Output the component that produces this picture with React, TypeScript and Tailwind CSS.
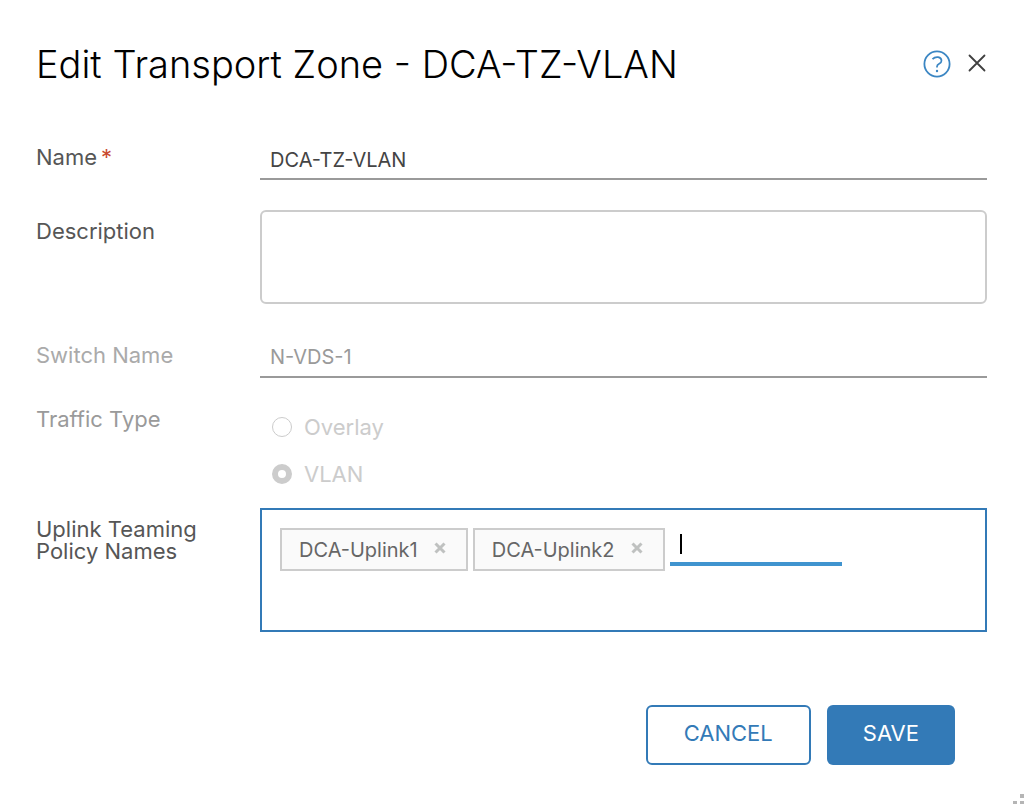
import { useState, type ReactNode } from "react";

interface FormRowProps {
  label: ReactNode;
  htmlFor: string;
  className?: string;
  labelClassName?: string;
  children: ReactNode;
}

const FormRow = ({ label, htmlFor, className = "", labelClassName = "", children }: FormRowProps) => {
  return (
    <div className={`flex items-start ${className}`}>
      <label htmlFor={htmlFor} className={`w-56 shrink-0 pr-4 text-[22px] leading-[22px] ${labelClassName}`}>
        {label}
      </label>
      <div className="min-w-0 flex-1">{children}</div>
    </div>
  );
};

interface RadioProps {
  id: string;
  label: string;
  checked: boolean;
}

const Radio = ({ id, label, checked }: RadioProps) => {
  return (
    <div className="flex items-center gap-3">
      <input
        id={id}
        type="radio"
        name="traffic-type"
        checked={checked}
        readOnly
        disabled
        className="size-5 appearance-none rounded-full border border-[#cccccc] checked:border-[6px]"
      />
      <label htmlFor={id} className="text-[22px] leading-[22px] text-[#cccccc]">
        {label}
      </label>
    </div>
  );
};

interface TagProps {
  name: string;
  onRemove: () => void;
}

const Tag = ({ name, onRemove }: TagProps) => {
  return (
    <span className="flex h-[43px] items-center border-2 border-[#cccccc] bg-[#fafafa] pr-5 pl-[17px] text-xl text-[#666666]">
      {name}
      <button type="button" aria-label={`Remove ${name}`} onClick={onRemove} className="ml-4">
        <svg width="12" height="12" viewBox="0 0 12 12" className="mb-1">
          <path d="M1.5 1.5L10.5 10.5M10.5 1.5L1.5 10.5" stroke="#bfc1c0" strokeWidth="3" />
        </svg>
      </button>
    </span>
  );
};

export default function App() {
  const [name, setName] = useState("DCA-TZ-VLAN");
  const [description, setDescription] = useState("");
  const [policies, setPolicies] = useState(["DCA-Uplink1", "DCA-Uplink2"]);

  return (
    <div className="relative min-h-screen bg-white pt-11 pr-[37px] pb-10 pl-9 font-['Inter','Liberation_Sans',sans-serif]">
      <header className="flex items-center justify-between">
        <h1 className="text-[38px] leading-10 font-light text-black">Edit Transport Zone - DCA-TZ-VLAN</h1>
        <div className="flex items-center gap-4">
          <button type="button" aria-label="Help">
            <svg width="28" height="28" viewBox="0 0 28 28" fill="none" stroke="#3b86c3">
              <circle cx="14" cy="14" r="12.6" strokeWidth="1.8" />
              <path d="M9.5 9.2C12.5 6 18.5 6.5 18.5 10.8C18.5 14.3 14 13.3 14 16.5V17.6" strokeWidth="1.7" />
              <circle cx="14" cy="21" r="1.2" fill="#3b86c3" stroke="none" />
            </svg>
          </button>
          <button type="button" aria-label="Close">
            <svg width="20" height="20" viewBox="0 0 20 20" className="mb-0.5">
              <path d="M2.5 2.5L17.5 17.5M17.5 2.5L2.5 17.5" stroke="#404040" strokeWidth="1.8" strokeLinecap="round" />
            </svg>
          </button>
        </div>
      </header>

      <form className="mt-14" onSubmit={(e) => e.preventDefault()}>
        <FormRow
          htmlFor="name"
          labelClassName="pt-1.5 text-[#565656]"
          label={
            <>
              Name<span className="ml-1 text-[#c94a30]">*</span>
            </>
          }
        >
          <input
            id="name"
            type="text"
            value={name}
            onChange={(e) => setName(e.target.value)}
            className="block h-10 w-full border-b-2 border-[#9a9a9a] px-2.5 pt-0.5 text-xl text-[#444444] outline-none"
          />
        </FormRow>

        <FormRow htmlFor="description" className="mt-[30px]" labelClassName="pt-2.5 text-[#565656]" label="Description">
          <textarea
            id="description"
            value={description}
            onChange={(e) => setDescription(e.target.value)}
            className="block h-[94px] w-full resize-none rounded-md border-2 border-[#cccccc] p-2.5 text-xl outline-none"
          />
        </FormRow>

        <FormRow htmlFor="switch-name" className="mt-[34px]" labelClassName="pt-1.5 text-[#aaaaaa]" label="Switch Name">
          <input
            id="switch-name"
            type="text"
            value="N-VDS-1"
            disabled
            className="block h-10 w-full border-b-2 border-[#9a9a9a] px-2.5 text-xl text-[#9a9a9a]"
          />
        </FormRow>

        <FormRow htmlFor="vlan" className="mt-6" labelClassName="pt-1.5 text-[#9a9a9a]" label="Traffic Type">
          <div className="flex flex-col gap-[25px] pt-3.5 pl-3">
            <Radio id="overlay" label="Overlay" checked={false} />
            <Radio id="vlan" label="VLAN" checked />
          </div>
        </FormRow>

        <FormRow
          htmlFor="policy"
          className="mt-[23px]"
          labelClassName="pt-2.5 text-[#565656]"
          label="Uplink Teaming Policy Names"
        >
          <div className="flex min-h-[124px] flex-wrap items-start gap-[5px] border-2 border-[#337ab7] p-[18px]">
            {policies.map((policy) => (
              <Tag key={policy} name={policy} onRemove={() => setPolicies(policies.filter((p) => p !== policy))} />
            ))}
            <div className="relative">
              <input
                id="policy"
                type="text"
                className="block h-[38px] w-[172px] border-b-4 border-[#4094cf] px-2.5 text-xl caret-transparent outline-none"
              />
              <span className="absolute top-1.5 left-2.5 h-5 w-0.5 bg-black" />
            </div>
          </div>
        </FormRow>

        <div className="mt-[73px] mr-8 flex justify-end gap-4">
          <button
            type="button"
            className="h-[60px] rounded-md border-2 border-[#337ab7] px-9 pb-1 text-[22px] text-[#337ab7]"
          >
            CANCEL
          </button>
          <button type="submit" className="h-[60px] rounded-md bg-[#337ab7] px-9 pb-1 text-[22px] text-white">
            SAVE
          </button>
        </div>
      </form>

      <svg width="11" height="11" viewBox="0 0 11 11" className="absolute right-0 bottom-0" fill="#b5b5b5">
        <rect x="7" y="0" width="4" height="4" />
        <rect x="0" y="7" width="4" height="3" />
        <rect x="7" y="7" width="4" height="3" />
      </svg>
    </div>
  );
}
